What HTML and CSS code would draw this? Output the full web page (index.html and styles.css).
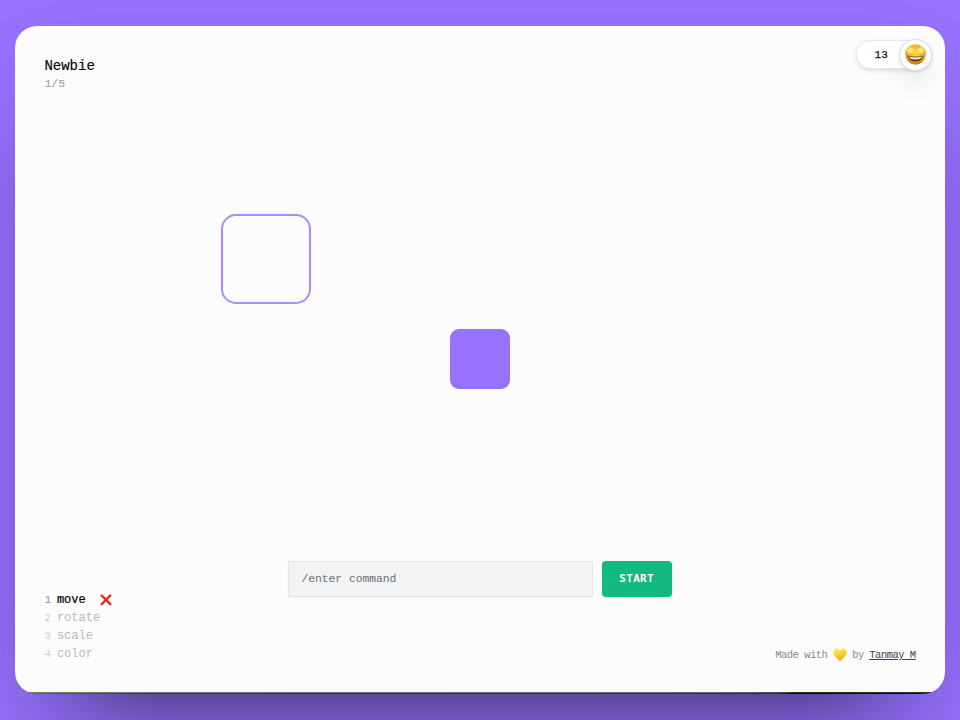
FILE: index.html
```html
<!DOCTYPE html>
<html lang="en">
<head>
<meta charset="utf-8">
<title>Newbie</title>
<link rel="stylesheet" href="styles.css">
</head>
<body>
<main class="panel">
  <header class="top">
    <div class="level">
      <h1 class="level-name">Newbie</h1>
      <p class="level-step">1/5</p>
    </div>
    <div class="score">
      <span class="score-value">13</span>
      <span class="avatar">
        <svg width="23" height="23" viewBox="0 0 24 24">
          <defs>
            <radialGradient id="face" cx=".5" cy=".4" r=".6"><stop offset="0" stop-color="#ffdc45"/><stop offset=".65" stop-color="#f3a923"/><stop offset="1" stop-color="#cf740f"/></radialGradient>
          </defs>
          <circle cx="12" cy="12" r="10.600" fill="url(#face)"/>
          <path d="M4 13Q12 15.800 20 13Q19 19.300 12 19.300T4 13Z" fill="#5d3c20"/>
          <path d="M5 14Q12 16.400 19 14Q18 17.200 12 17.200T5 14Z" fill="#f5f1ec"/>
          <path d="M6.400 2.800L8.200 5.500L11.600 6L9.500 8.600L10.400 11.600L7 10.600L4 12.200L3.900 9.100L.8 7.200L4.500 6Z" fill="#ffe672" stroke="#eeb02c" stroke-width=".5"/>
          <path d="M17.600 2.800L15.800 5.500L12.400 6L14.500 8.600L13.600 11.600L17 10.600L20 12.200L20.100 9.100L23.200 7.200L19.500 6Z" fill="#ffe672" stroke="#eeb02c" stroke-width=".5"/>
        </svg>
      </span>
    </div>
  </header>

  <section class="stage">
    <div class="target"></div>
    <div class="box"></div>
  </section>

  <form class="command">
    <input class="command-input" type="text" placeholder="/enter command">
    <button class="command-start" type="button">START</button>
  </form>

  <footer class="bottom">
    <ol class="steps">
      <li class="step step-active"><span class="num">1</span><span>move</span>
        <svg class="cross" width="12" height="12" viewBox="0 0 12 12"><path d="M1.700 1.500L10.300 10.100M10.300 1.500L1.700 10.100" stroke="#ee2411" stroke-width="2.300" stroke-linecap="round"/></svg>
      </li>
      <li class="step"><span class="num">2</span><span>rotate</span></li>
      <li class="step"><span class="num">3</span><span>scale</span></li>
      <li class="step"><span class="num">4</span><span>color</span></li>
    </ol>
    <p class="credit">
      <span>Made with</span>
      <svg class="heart" width="14" height="14" viewBox="0 0 14 14">
        <defs><linearGradient id="gold" x1="0" y1="0" x2=".3" y2="1"><stop offset="0" stop-color="#ffe873"/><stop offset=".55" stop-color="#ffd02f"/><stop offset="1" stop-color="#f0a31c"/></linearGradient></defs>
        <path d="M7 13.500C5.600 11.200.3 8.600.3 4.300C.3 2 1.900.6 3.800.6C5.300.6 6.500 1.500 7 2.900C7.500 1.500 8.700.6 10.200.6C12.100.6 13.700 2 13.700 4.300C13.700 8.600 8.400 11.200 7 13.500Z" fill="url(#gold)"/>
      </svg>
      <span>by</span>
      <a class="author" href="#">Tanmay M</a>
    </p>
  </footer>
</main>
</body>
</html>
```
FILE: styles.css
```css
* { box-sizing: border-box; }

body {
  margin: 0;
  height: 720px;
  overflow: hidden;
  padding: 26px 15px 0;
  background: #9672ff;
  font-family: "Liberation Mono", monospace;
  color: #111;
}

.panel {
  height: 668px;
  margin: 0 0 0 .4px;
  width: 929.2px;
  padding: 0 29px 30px;
  display: flex;
  flex-direction: column;
  border-radius: 22px;
  background:
    linear-gradient(90deg, #777a75 0, #69696b 75%, #465049 83%, #272a27 84%, #30332f) 0 666px / 100% 1px no-repeat,
    linear-gradient(90deg, #62685c 0, #34394f 15%, #282d55 82%, #08090c 83.200%, #101211) 0 667px / 100% 1px no-repeat,
    #fcfcfc;
  box-shadow:
    0 60px 110px -22px rgba(0, 0, 0, .18),
    0 55px 90px -62px rgba(0, 0, 0, .62);
}

.top {
  height: 174px;
  display: flex;
  justify-content: space-between;
}

.level { padding-top: 30px; }

.level-name {
  margin: 0;
  font-size: 14px;
  line-height: 20px;
  font-weight: 400;
  color: #000;
  -webkit-text-stroke: .15px;
}

.level-step {
  margin: -1px 0 0;
  font-size: 11.500px;
  line-height: 17px;
  color: #999;
}

.score {
  width: 75px;
  height: 29px;
  margin: 14px -15px 0 0;
  display: flex;
  align-items: center;
  justify-content: space-between;
  padding-left: 18px;
  border: 1px solid #e5e8ee;
  border-radius: 15px;
  background: #fff;
  box-shadow: 0 2px 5px rgba(0, 0, 0, .12);
}

.score-value {
  font-size: 11px;
  -webkit-text-stroke: .25px;
}

.avatar {
  width: 33px;
  height: 32px;
  margin-right: -2px;
  flex: none;
  display: flex;
  align-items: center;
  justify-content: center;
  border: 1px solid #d7deea;
  border-radius: 50%;
  background: #fff;
  box-shadow: 0 1px 3px rgba(0, 0, 0, .09), 0 16px 22px rgba(0, 0, 0, .06);
}

.stage {
  height: 361px;
  padding-left: 176.600px;
  display: flex;
  gap: 139px;
}

.target {
  width: 90px;
  height: 90px;
  margin-top: 13.500px;
  border: 2px solid #a98bfb;
  border-radius: 15px;
}

.box {
  width: 60px;
  height: 60px;
  margin-top: 129px;
  border-radius: 9px;
  background: #9672ff;
}

.command {
  display: flex;
  gap: 9px;
  margin-left: 244px;
  height: 36px;
}

.command-input {
  width: 305px;
  padding: 0 12px;
  border: 1px solid #e2e4e9;
  border-radius: 1px;
  background: #f2f3f5;
  font: 11.400px "Liberation Mono", monospace;
  letter-spacing: -.05px;
  box-shadow: 0 1px 2px rgba(0, 0, 0, .04);
}

.command-input::placeholder {
  color: #6b6e75;
  opacity: 1;
}

.command-start {
  width: 69.500px;
  padding: 0 1px 1px 0;
  border: 0;
  border-radius: 4px;
  background: #12b981;
  color: #fff;
  font: 700 11px "DejaVu Sans Mono", monospace;
  letter-spacing: .3px;
  box-shadow: 0 1px 2px rgba(0, 0, 0, .08);
}

.bottom {
  flex: 1;
  display: flex;
  justify-content: space-between;
  align-items: flex-start;
  margin-top: -6px;
}

.steps {
  margin: 0;
  padding: 0;
  list-style: none;
}

.step {
  height: 18px;
  display: flex;
  align-items: center;
  gap: 5.500px;
  font-size: 12px;
  color: #b9b9b9;
}

.num {
  width: 7px;
  font-size: 11px;
  color: #cfcfcf;
}

.step-active {
  color: #000;
  -webkit-text-stroke: .2px;
}

.step-active .num {
  color: #8e8e8e;
  -webkit-text-stroke: 0;
}

.cross { margin-left: 9px; }

.credit {
  margin: 56px 0 0;
  display: flex;
  align-items: center;
  gap: 5.500px;
  font-size: 10.500px;
  letter-spacing: -.52px;
  line-height: 16px;
  color: #85888f;
}

.heart { margin-top: -1px; }

.author {
  color: #374151;
  text-decoration: underline;
  text-underline-offset: 1px;
}
```
